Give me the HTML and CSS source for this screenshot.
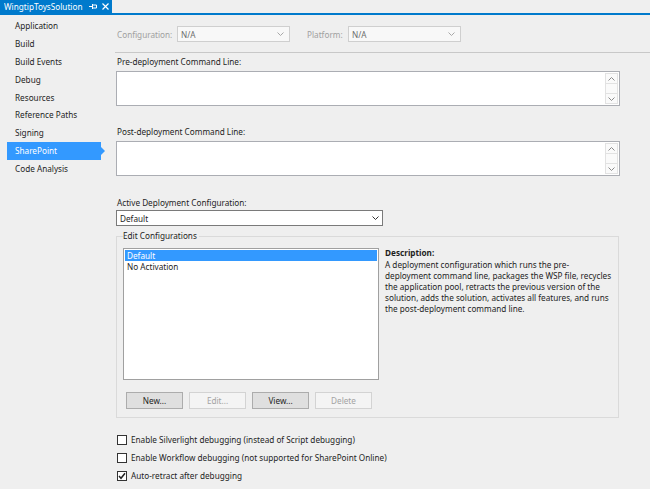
FILE: index.html
```html
<!DOCTYPE html>
<html>
<head>
<meta charset="utf-8">
<link rel="stylesheet" href="styles.css">
</head>
<body>
<div class="window">
  <div class="tabbar">
    <div class="tab">
      <span class="tab-title">WingtipToysSolution</span>
      <svg class="tab-pin" width="8" height="7" viewBox="0 0 8 7"><path d="M0 3.5H3M3.5 1V6M3.5 2H7.5V5H3.5" fill="none" stroke="#fff" stroke-width="1"/></svg>
      <svg class="tab-close" width="7" height="7" viewBox="0 0 7 7"><path d="M0.5 0.5L6.5 6.5M6.5 0.5L0.5 6.5" stroke="#fff" stroke-width="1.2"/></svg>
    </div>
  </div>
  <div class="main">
    <nav class="nav">
      <div class="nav-item">Application</div>
      <div class="nav-item">Build</div>
      <div class="nav-item">Build Events</div>
      <div class="nav-item">Debug</div>
      <div class="nav-item">Resources</div>
      <div class="nav-item">Reference Paths</div>
      <div class="nav-item">Signing</div>
      <div class="nav-item active">SharePoint</div>
      <div class="nav-item">Code Analysis</div>
    </nav>
    <main class="content">
      <div class="toprow">
        <span class="dim lbl-config">Configuration:</span>
        <div class="combo disabled"><span>N/A</span><svg width="7" height="4" viewBox="0 0 7 4"><path d="M0.5 0.5L3.5 3.5L6.5 0.5" fill="none" stroke="#a8a8a8"/></svg></div>
        <span class="dim lbl-platform">Platform:</span>
        <div class="combo disabled"><span>N/A</span><svg width="7" height="4" viewBox="0 0 7 4"><path d="M0.5 0.5L3.5 3.5L6.5 0.5" fill="none" stroke="#a8a8a8"/></svg></div>
      </div>
      <div class="rule"></div>

      <div class="field-label first">Pre-deployment Command Line:</div>
      <div class="textbox">
        <div class="vscroll">
          <div class="sb-btn"><svg width="7" height="4" viewBox="0 0 7 4"><path d="M0.5 3.5L3.5 0.5L6.5 3.5" fill="none" stroke="#8a8a8a"/></svg></div>
          <div class="sb-track"></div>
          <div class="sb-btn"><svg width="7" height="4" viewBox="0 0 7 4"><path d="M0.5 0.5L3.5 3.5L6.5 0.5" fill="none" stroke="#8a8a8a"/></svg></div>
        </div>
      </div>

      <div class="field-label second">Post-deployment Command Line:</div>
      <div class="textbox">
        <div class="vscroll">
          <div class="sb-btn"><svg width="7" height="4" viewBox="0 0 7 4"><path d="M0.5 3.5L3.5 0.5L6.5 3.5" fill="none" stroke="#8a8a8a"/></svg></div>
          <div class="sb-track"></div>
          <div class="sb-btn"><svg width="7" height="4" viewBox="0 0 7 4"><path d="M0.5 0.5L3.5 3.5L6.5 0.5" fill="none" stroke="#8a8a8a"/></svg></div>
        </div>
      </div>

      <div class="field-label third">Active Deployment Configuration:</div>
      <div class="select"><span>Default</span><svg width="7" height="4" viewBox="0 0 7 4"><path d="M0.5 0.5L3.5 3.5L6.5 0.5" fill="none" stroke="#333"/></svg></div>

      <fieldset class="group">
        <legend>Edit Configurations</legend>
        <div class="group-body">
          <div class="listbox">
            <div class="list-item selected">Default</div>
            <div class="list-item">No Activation</div>
          </div>
          <div class="desc">
            <div class="desc-title">Description:</div>
            <div class="desc-text">A deployment configuration which runs the pre-<br>deployment command line, packages the WSP file, recycles<br>the application pool, retracts the previous version of the<br>solution, adds the solution, activates all features, and runs<br>the post-deployment command line.</div>
          </div>
        </div>
        <div class="buttons">
          <div class="btn">New...</div>
          <div class="btn disabled">Edit...</div>
          <div class="btn">View...</div>
          <div class="btn disabled">Delete</div>
        </div>
      </fieldset>

      <div class="checks">
        <div class="check-row"><span class="checkbox"></span><span>Enable Silverlight debugging (instead of Script debugging)</span></div>
        <div class="check-row"><span class="checkbox"></span><span>Enable Workflow debugging (not supported for SharePoint Online)</span></div>
        <div class="check-row"><span class="checkbox"><svg width="8" height="8" viewBox="0 0 8 8"><path d="M1 4L3 6.3L7 1.2" fill="none" stroke="#222" stroke-width="1.5"/></svg></span><span>Auto-retract after debugging</span></div>
      </div>
    </main>
  </div>
</div>
</body>
</html>
```

FILE: styles.css
```css
* { box-sizing: border-box; }
html, body { margin: 0; padding: 0; }
body {
  width: 650px;
  height: 489px;
  overflow: hidden;
  background: #efefef;
  font-family: "Noto Sans", "Open Sans", sans-serif;
  font-size: 8.2px;
  color: #1e1e1e;
}
.window { display: flex; flex-direction: column; height: 489px; }

.tabbar {
  height: 15px;
  border-bottom: 2px solid #007acc;
  display: flex;
  flex: none;
}
.tab {
  width: 112px;
  height: 13px;
  background: #007acc;
  color: #fff;
  display: flex;
  align-items: center;
  padding-left: 4px;
  font-size: 8.2px;
  line-height: 13px;
}
.tab-title { width: 85px; white-space: nowrap; overflow: hidden; }
.tab-close { margin-left: 5px; }

.main { display: flex; flex: 1; }
.nav {
  width: 116px;
  flex: none;
  padding-top: 2px;
  display: flex;
  flex-direction: column;
}
.nav-item {
  margin-left: 7px;
  width: 94px;
  height: 17.9px;
  line-height: 17.9px;
  padding-left: 8px;
  position: relative;
  white-space: nowrap;
}
.nav-item.active { background: #3399ff; color: #fff; }
.nav-item.active::after {
  content: "";
  position: absolute;
  right: -4px;
  top: 50%;
  margin-top: -4px;
  border-left: 4px solid #3399ff;
  border-top: 4px solid transparent;
  border-bottom: 4px solid transparent;
}

.content { flex: 1; display: flex; flex-direction: column; }

.toprow {
  display: flex;
  align-items: center;
  margin-top: 11px;
  height: 16px;
  padding-left: 1px;
}
.dim { color: #a0a0a0; white-space: nowrap; }
.lbl-config { width: 60px; }
.lbl-platform { margin-left: 17px; width: 41px; }
.combo {
  width: 113px;
  height: 16px;
  border: 1px solid #cfcfcf;
  background: #f8f8f8;
  display: flex;
  align-items: center;
  justify-content: space-between;
  padding: 0 5px 0 3px;
  color: #6d6d6d;
}

.rule { margin: 10px 0 0 -1px; height: 1px; background: #c8c8c8; }

.field-label { line-height: 12px; white-space: nowrap; padding-left: 1px; }
.field-label.first { margin-top: 3px; }
.field-label.second { margin-top: 20px; }
.field-label.third { margin-top: 21px; }

.textbox {
  width: 504px;
  height: 35px;
  margin-top: 3px;
  border: 1px solid #abadb3;
  background: #fff;
  display: flex;
  justify-content: flex-end;
}
.vscroll {
  width: 13px;
  margin: 1px 1px 1px 0;
  display: flex;
  flex-direction: column;
  background: #fafafa;
}
.sb-btn {
  height: 11px;
  border: 1px solid #e2e2e2;
  display: flex;
  align-items: center;
  justify-content: center;
}
.sb-track { flex: 1; border-left: 1px solid #e2e2e2; border-right: 1px solid #e2e2e2; }

.select {
  width: 267px;
  height: 16px;
  margin-top: 1px;
  border: 1px solid #7a7a7a;
  background: #fff;
  display: flex;
  align-items: center;
  justify-content: space-between;
  padding: 0 3px 0 3px;
}

.group {
  margin: 4px 0 0 0;
  padding: 6px 5px 8px 6px;
  width: 503px;
  border: 1px solid #dadada;
  min-inline-size: 0;
}
.group legend {
  padding: 0 2px 0 0;
  line-height: 12px;
  white-space: nowrap;
}
.group-body { display: flex; }
.listbox {
  width: 256px;
  height: 132px;
  border: 1px solid #a0a0a0;
  background: #fff;
  padding: 1px;
  flex: none;
}
.list-item { height: 11px; line-height: 11px; padding-left: 2px; }
.list-item.selected { background: #3399ff; color: #fff; }
.desc { margin-left: 6px; margin-top: -1px; white-space: nowrap; }
.desc-title { font-weight: bold; line-height: 12px; }
.desc-text { line-height: 11px; }

.buttons { display: flex; gap: 6px; margin-top: 12px; padding-left: 3px; }
.btn {
  width: 57px;
  height: 17px;
  border: 1px solid #acacac;
  background: #dfdfdf;
  display: flex;
  align-items: center;
  justify-content: center;
}
.btn.disabled { border-color: #d3d3d3; background: #f4f4f4; color: #a3a3a3; }

.checks { margin-top: 13px; display: flex; flex-direction: column; }
.check-row {
  height: 17.9px;
  display: flex;
  align-items: center;
  padding-left: 1px;
  white-space: nowrap;
}
.checkbox {
  width: 10px;
  height: 10px;
  border: 1px solid #333;
  background: #fff;
  margin-right: 4px;
  display: flex;
  align-items: center;
  justify-content: center;
}
```
